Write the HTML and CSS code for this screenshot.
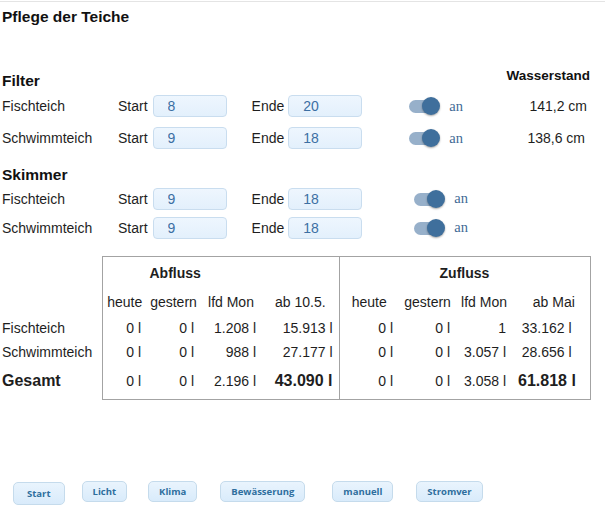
FILE: index.html
```html
<!DOCTYPE html>
<html lang="de">
<head>
    <meta charset="UTF-8">
    <meta name="viewport" content="width=device-width, initial-scale=1.0">
    <title>Pflege der Teiche</title>
    <link rel="stylesheet" href="styles.css">
</head>
<body>
<div class="page">
    <h1 class="page-title">Pflege der Teiche</h1>

    <div class="section-head">
        <h2>Filter</h2>
        <span class="level-head">Wasserstand</span>
    </div>
    <div class="pump-row">
        <span class="pond">Fischteich</span>
        <label class="time-label">Start</label><input class="time-input" type="text" value="8">
        <label class="time-label end">Ende</label><input class="time-input" type="text" value="20">
        <span class="switch"><span class="switch-track"></span><span class="switch-knob"></span></span>
        <span class="switch-text">an</span>
        <span class="level">141,2 cm</span>
    </div>
    <div class="pump-row">
        <span class="pond">Schwimmteich</span>
        <label class="time-label">Start</label><input class="time-input" type="text" value="9">
        <label class="time-label end">Ende</label><input class="time-input" type="text" value="18">
        <span class="switch"><span class="switch-track"></span><span class="switch-knob"></span></span>
        <span class="switch-text">an</span>
        <span class="level second">138,6 cm</span>
    </div>

    <div class="section-head skimmer">
        <h2>Skimmer</h2>
    </div>
    <div class="pump-row compact">
        <span class="pond">Fischteich</span>
        <label class="time-label">Start</label><input class="time-input" type="text" value="9">
        <label class="time-label end">Ende</label><input class="time-input" type="text" value="18">
        <span class="switch"><span class="switch-track"></span><span class="switch-knob"></span></span>
        <span class="switch-text">an</span>
    </div>
    <div class="pump-row compact">
        <span class="pond">Schwimmteich</span>
        <label class="time-label">Start</label><input class="time-input" type="text" value="9">
        <label class="time-label end">Ende</label><input class="time-input" type="text" value="18">
        <span class="switch"><span class="switch-track"></span><span class="switch-knob"></span></span>
        <span class="switch-text">an</span>
    </div>

    <table class="flow">
        <colgroup><col class="c-name"></colgroup>
        <colgroup class="grp"><col class="c-a1"><col class="c-a2"><col class="c-a3"><col class="c-a4"></colgroup>
        <colgroup class="grp"><col class="c-z1"><col class="c-z2"><col class="c-z3"><col class="c-z4"></colgroup>
        <tr class="grp-row">
            <td></td>
            <th colspan="4" class="grp-title out">Abfluss</th>
            <th colspan="4" class="grp-title in">Zufluss</th>
        </tr>
        <tr class="col-row">
            <td></td>
            <th>heute</th><th>gestern</th><th>lfd Mon</th><th>ab 10.5.</th>
            <th>heute</th><th>gestern</th><th>lfd Mon</th><th class="last">ab Mai</th>
        </tr>
        <tr class="val-row first">
            <td class="name">Fischteich</td>
            <td>0 l</td><td>0 l</td><td>1.208 l</td><td>15.913 l</td>
            <td>0 l</td><td>0 l</td><td>1</td><td class="last">33.162 l</td>
        </tr>
        <tr class="val-row">
            <td class="name">Schwimmteich</td>
            <td>0 l</td><td>0 l</td><td>988 l</td><td>27.177 l</td>
            <td>0 l</td><td>0 l</td><td>3.057 l</td><td class="last">28.656 l</td>
        </tr>
        <tr class="sum-row">
            <td class="name">Gesamt</td>
            <td>0 l</td><td>0 l</td><td>2.196 l</td><td class="big">43.090 l</td>
            <td>0 l</td><td>0 l</td><td>3.058 l</td><td class="big last">61.818 l</td>
        </tr>
    </table>

    <div class="nav">
        <button class="nav-btn current">Start</button>
        <button class="nav-btn">Licht</button>
        <button class="nav-btn">Klima</button>
        <button class="nav-btn shift-2">Bewässerung</button>
        <button class="nav-btn shift-6">manuell</button>
        <button class="nav-btn shift-2">Stromver</button>
    </div>
</div>
</body>
</html>
```

FILE: styles.css
```css
body {
    margin: 0;
    padding-top: 1px;
    font-family: "Liberation Sans", Arial, sans-serif;
    color: #1e1e1e;
    background: #fff;
}

.page {
    width: 605px;
    border-top: 1px solid #e4e4e4;
}

.page-title {
    margin: 6px 0 0 2px;
    font-size: 15.5px;
    line-height: 18px;
    font-weight: bold;
    color: #111;
}

/* Abschnittskopf: Filter / Skimmer */
.section-head {
    display: flex;
    justify-content: space-between;
    align-items: flex-start;
    height: 18px;
    margin: 46px 15px 0 2px;
}

.section-head h2 {
    margin: 0;
    font-size: 15.5px;
    line-height: 18px;
    color: #111;
}

.section-head.skimmer {
    margin-top: 12px;
}

.level-head {
    margin-top: -4px;
    font-size: 13.5px;
    line-height: 15px;
    font-weight: bold;
    color: #111;
}

.pump-row {
    display: flex;
    align-items: center;
    height: 32px;
    font-size: 14px;
}

.pump-row.compact {
    height: 29px;
}

.pond {
    width: 116px;
    padding-left: 2px;
}

.time-input {
    box-sizing: border-box;
    width: 74px;
    height: 22px;
    margin: 0 0 0 5px;
    padding: 0 0 0 14px;
    border: 1px solid #c9ddef;
    border-radius: 4px;
    background: linear-gradient(#eef6fe, #e3f0fc);
    font: 14px "Liberation Sans", Arial, sans-serif;
    color: #3c6fa3;
}

.time-label.end {
    margin-left: 25px;
}

.time-label.end + .time-input {
    margin-left: 4px;
}

/* Schalter (an/aus) */
.switch {
    position: relative;
    width: 32px;
    height: 20px;
    margin-left: 46px;
}

.compact .switch {
    margin-left: 51px;
}

.switch-track {
    position: absolute;
    left: 1px;
    top: 4px;
    width: 26px;
    height: 13px;
    border-radius: 7px;
    background: #97b0ca;
}

.switch-knob {
    position: absolute;
    right: 0;
    top: 1px;
    width: 18px;
    height: 18px;
    border-radius: 50%;
    background: #3f6f9c;
    box-shadow: 0 1px 2px rgba(0, 0, 0, 0.35);
}

.switch-text {
    margin-left: 9px;
    font-family: "Liberation Serif", "Times New Roman", serif;
    font-size: 14.5px;
    color: #3f6a96;
}

.level {
    margin-left: auto;
    padding-right: 18px;
}

.level.second {
    padding-right: 20px;
}

/* Durchfluss-Tabelle */
.flow {
    width: 590px;
    margin-top: 14px;
    border-collapse: collapse;
    table-layout: fixed;
    font-size: 14px;
}

.flow colgroup.grp {
    border: 1px solid #a3a3a3;
}

.c-name { width: 102px; }
.c-a1 { width: 45px; }
.c-a2 { width: 53px; }
.c-a3 { width: 62px; }
.c-a4 { width: 77px; }
.c-z1 { width: 60px; }
.c-z2 { width: 57px; }
.c-z3 { width: 56px; }
.c-z4 { width: 78px; }

.flow td,
.flow th {
    padding: 0 6px;
    white-space: nowrap;
    text-align: right;
}

.grp-row th {
    height: 31px;
    text-align: left;
    font-size: 14px;
}

.grp-title.out { padding-left: 47px; }
.grp-title.in { padding-left: 100px; }

.col-row th {
    height: 28px;
    padding: 0;
    text-align: center;
    font-weight: normal;
}

.col-row th.last {
    padding-left: 6px;
}

.val-row td {
    height: 23px;
}

.val-row.first td {
    height: 24px;
}

.flow td.name {
    padding-left: 2px;
    text-align: left;
}

.flow td.last {
    padding-right: 18px;
}

.sum-row td {
    height: 36px;
}

.sum-row td.name,
.sum-row td.big {
    font-size: 16px;
    font-weight: bold;
}

/* Navigation unten */
.nav {
    display: flex;
    align-items: flex-start;
    gap: 21px;
    margin-top: 81px;
    padding-left: 13px;
}

.nav-btn {
    height: 21px;
    margin: 0;
    padding: 0 10px;
    border: 1px solid #c5dbec;
    border-radius: 5px;
    background: linear-gradient(#e9f4fd, #d9ebfb);
    color: #2e6e9e;
    font: bold 9.5px "Open Sans", "Liberation Sans", sans-serif;
}

.nav-btn.current {
    height: 23px;
    margin: 1px -4px 0 0;
    padding: 0 13px;
}

.nav-btn.shift-2 {
    margin-left: 2px;
}

.nav-btn.shift-6 {
    margin-left: 6px;
}
```
